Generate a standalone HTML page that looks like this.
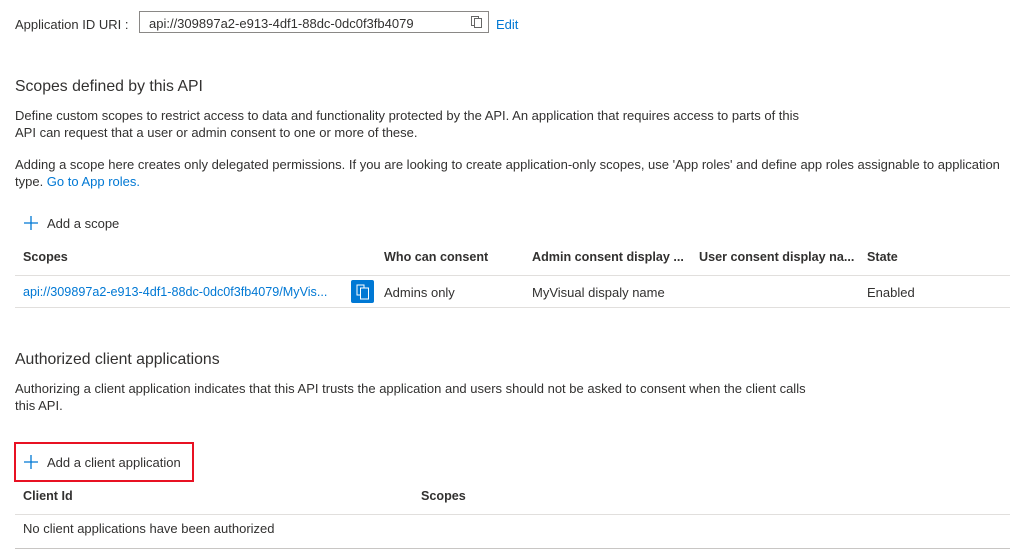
<!DOCTYPE html>
<html><head><meta charset="utf-8"><style>
body{margin:0;width:1010px;height:551px;background:#fff;font-family:"Liberation Sans",sans-serif;font-size:13px;color:#323130;position:relative;overflow:hidden}
.a{position:absolute;white-space:nowrap}
.l{color:#0078d4}
.b{font-weight:bold;font-size:12.6px}
.h{font-size:15.8px}
.line{position:absolute;height:1px;background:#e1dfdd;left:15px;width:995px}
</style></head><body>
<div class="a" style="left:15px;top:17px">Application ID URI :</div>
<div class="a" style="left:139px;top:11px;width:350px;height:22px;border:1px solid #8a8886;box-sizing:border-box"></div>
<div class="a" style="left:149px;top:16px">api://309897a2-e913-4df1-88dc-0dc0f3fb4079</div>
<svg class="a" style="left:470px;top:15px" width="14" height="14"><rect x="1.5" y="1.5" width="7" height="9" fill="none" stroke="#666"/><rect x="4.5" y="3.5" width="7" height="9" fill="#fff" stroke="#666"/></svg>
<div class="a l" style="left:496px;top:17px">Edit</div>
<div class="a h" style="left:15px;top:78px">Scopes defined by this API</div>
<div class="a" style="left:15px;top:108px">Define custom scopes to restrict access to data and functionality protected by the API. An application that requires access to parts of this</div>
<div class="a" style="left:15px;top:125px">API can request that a user or admin consent to one or more of these.</div>
<div class="a" style="left:15px;top:157px">Adding a scope here creates only delegated permissions. If you are looking to create application-only scopes, use 'App roles' and define app roles assignable to application</div>
<div class="a" style="left:15px;top:174px">type. <span class="l">Go to App roles.</span></div>
<svg class="a" style="left:23px;top:215px" width="16" height="16"><path d="M8 1v14M1 8h14" stroke="#0078d4" stroke-width="1.3"/></svg>
<div class="a" style="left:47px;top:216px">Add a scope</div>
<div class="a b" style="left:23px;top:250px">Scopes</div>
<div class="a b" style="left:384px;top:250px">Who can consent</div>
<div class="a b" style="left:532px;top:250px">Admin consent display ...</div>
<div class="a b" style="left:699px;top:250px">User consent display na...</div>
<div class="a b" style="left:867px;top:250px">State</div>
<div class="line" style="top:275px"></div>
<div class="a l" style="left:23px;top:285px;font-size:12.6px">api://309897a2-e913-4df1-88dc-0dc0f3fb4079/MyVis...</div>
<div class="a" style="left:351px;top:280px;width:23px;height:23px;background:#0078d4;border-radius:2px"></div>
<svg class="a" style="left:356px;top:284px" width="14" height="16"><rect x="1" y="1" width="7" height="10" fill="none" stroke="#fff"/><rect x="4.5" y="4" width="8" height="11" fill="#0078d4" stroke="#fff"/></svg>
<div class="a" style="left:384px;top:285px">Admins only</div>
<div class="a" style="left:532px;top:285px">MyVisual dispaly name</div>
<div class="a" style="left:867px;top:285px">Enabled</div>
<div class="line" style="top:307px"></div>
<div class="a h" style="left:15px;top:351px">Authorized client applications</div>
<div class="a" style="left:15px;top:381px">Authorizing a client application indicates that this API trusts the application and users should not be asked to consent when the client calls</div>
<div class="a" style="left:15px;top:398px">this API.</div>
<div class="a" style="left:14px;top:442px;width:180px;height:40px;border:2px solid #e81123;box-sizing:border-box"></div>
<svg class="a" style="left:23px;top:454px" width="16" height="16"><path d="M8 1v14M1 8h14" stroke="#0078d4" stroke-width="1.3"/></svg>
<div class="a" style="left:47px;top:455px">Add a client application</div>
<div class="a b" style="left:23px;top:489px">Client Id</div>
<div class="a b" style="left:421px;top:489px">Scopes</div>
<div class="line" style="top:514px"></div>
<div class="a" style="left:23px;top:521px">No client applications have been authorized</div>
<div class="line" style="top:548px;background:#c8c6c4"></div>
</body></html>
